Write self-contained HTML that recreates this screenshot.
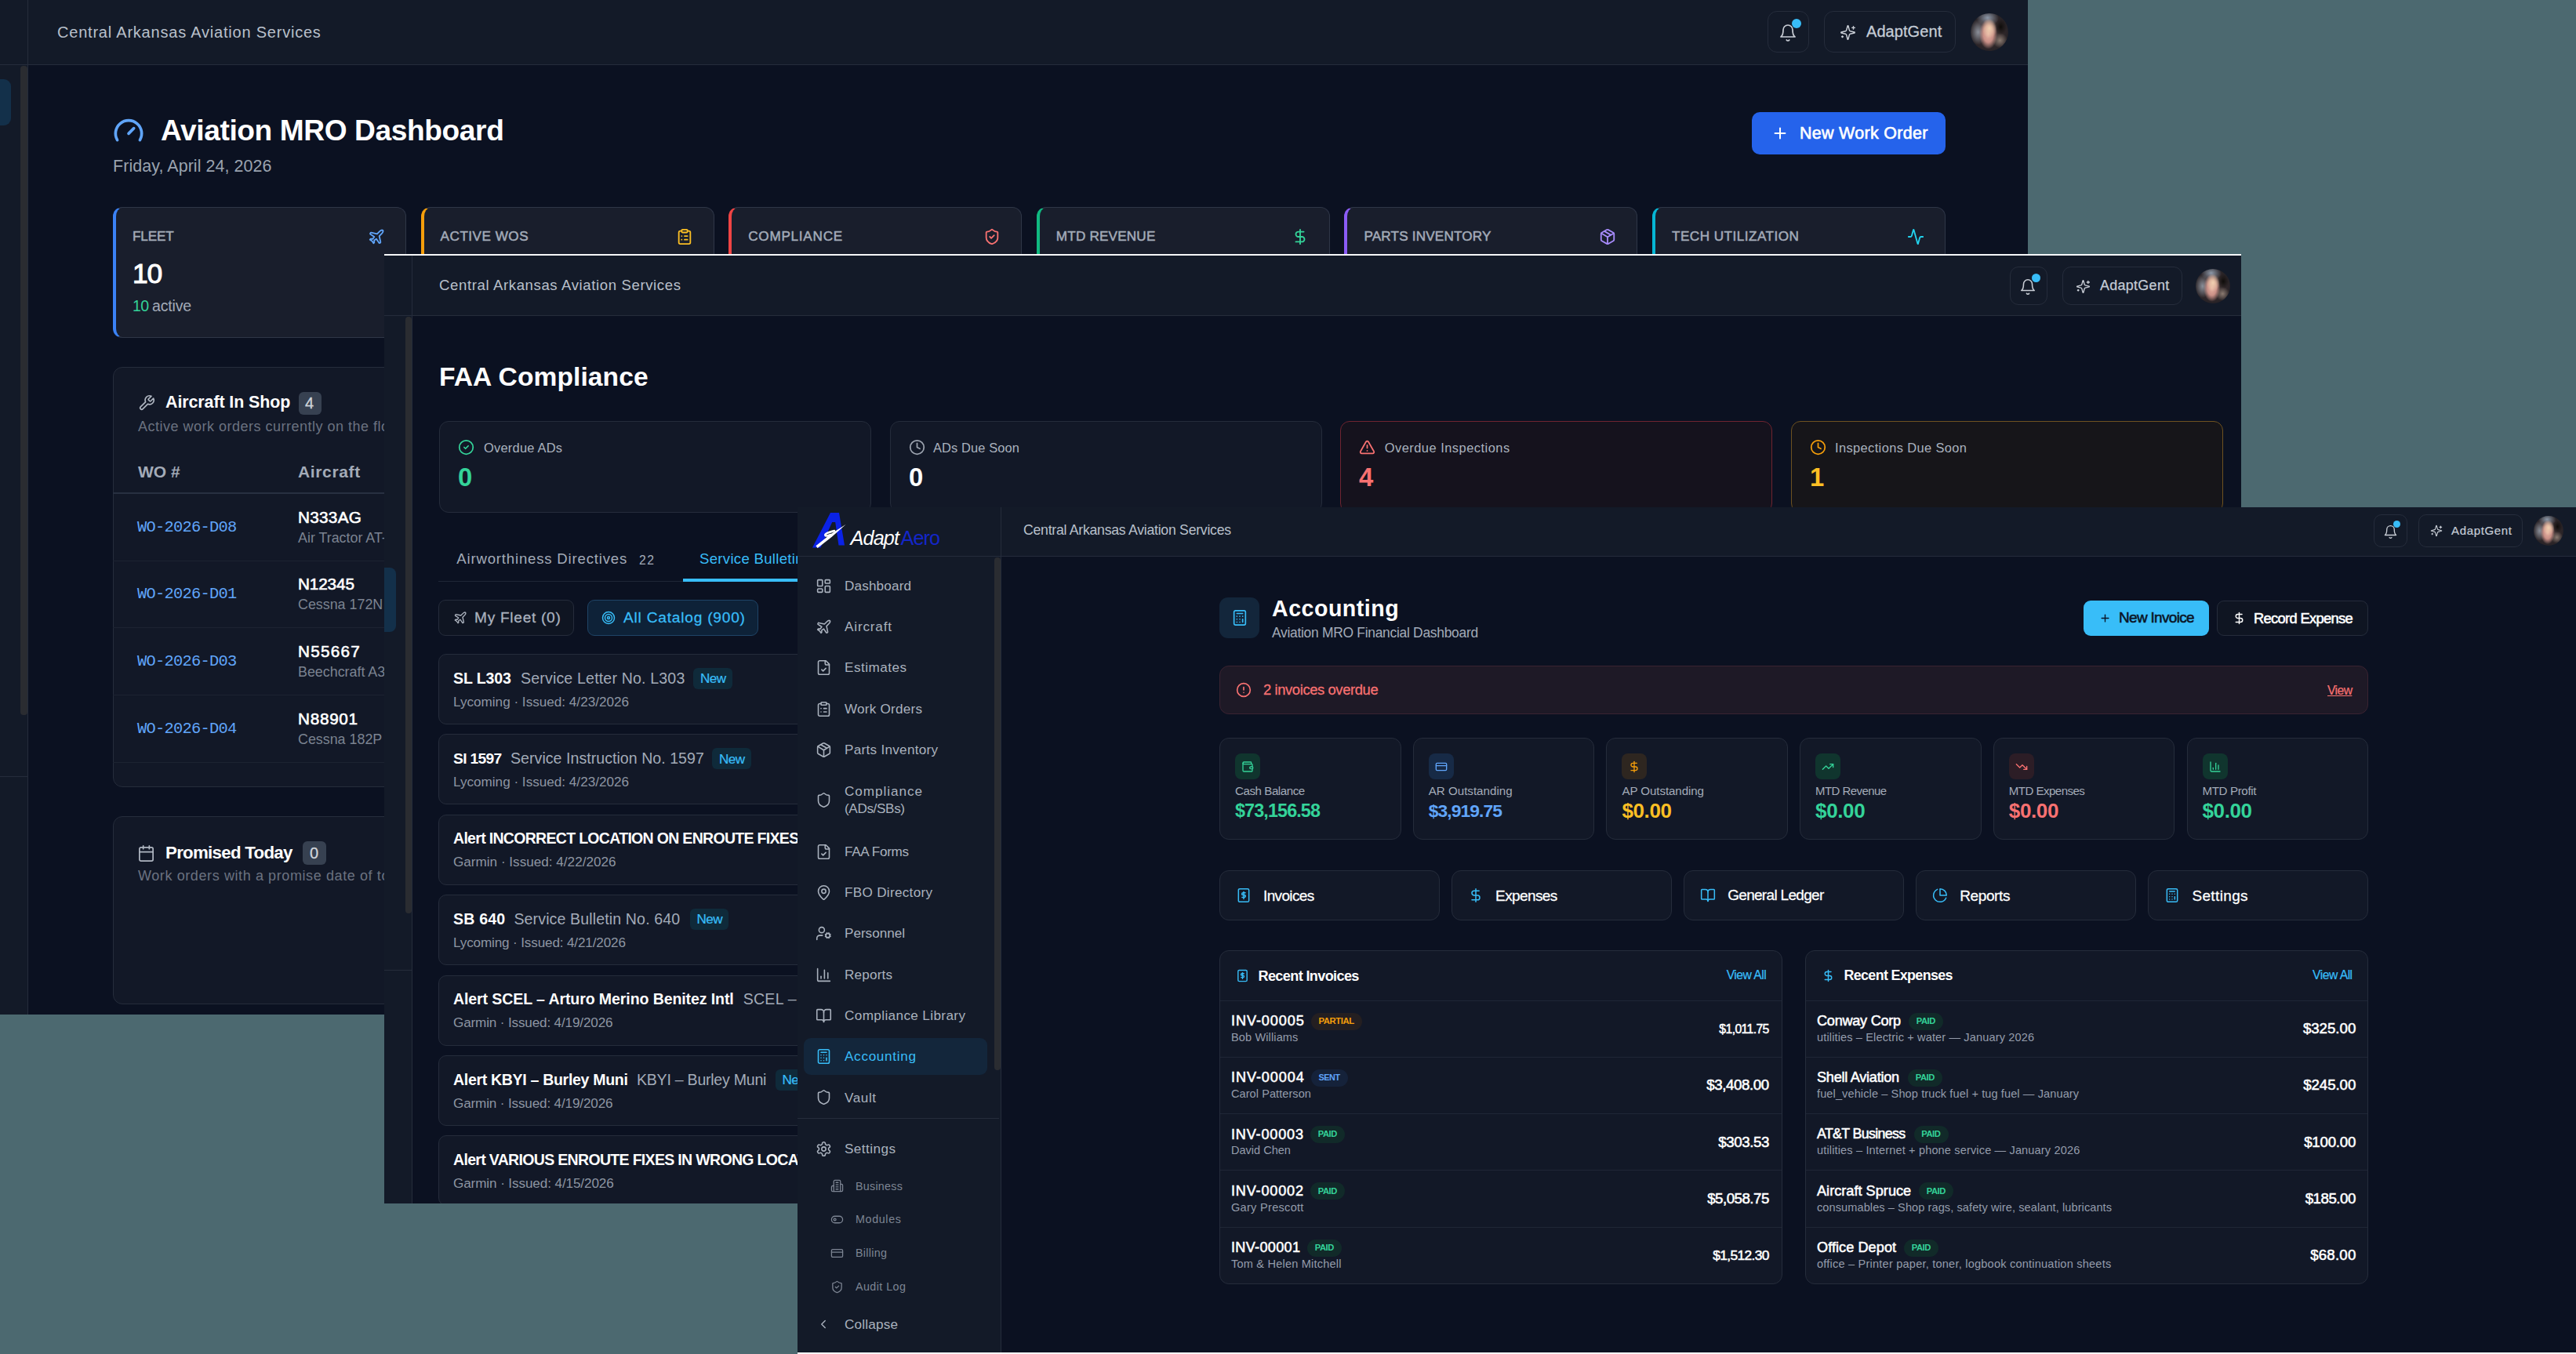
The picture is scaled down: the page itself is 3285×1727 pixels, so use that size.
<!DOCTYPE html><html><head><meta charset="utf-8"><style>html,body{margin:0;padding:0;}body{width:3285px;height:1727px;position:relative;overflow:hidden;background:#4c6970;font-family:'Liberation Sans',sans-serif;}</style></head><body><div style="position:absolute;left:0px;top:0px;width:2586px;height:1294px;background:#0b1121;overflow:hidden;"><div style="position:absolute;left:0px;top:0px;width:35px;height:1294px;background:#131a28;"></div><div style="position:absolute;left:35px;top:0px;width:1px;height:1294px;background:#252c3b;"></div><div style="position:absolute;left:0px;top:101px;width:14px;height:59px;background:#13304a;border-radius:0 9px 9px 0;"></div><div style="position:absolute;left:26px;top:84px;width:9px;height:828px;background:#2a2c31;border-radius:4px;"></div><div style="position:absolute;left:0px;top:990px;width:35px;height:1px;background:#252c3b;"></div><div style="position:absolute;left:36px;top:0px;width:2550px;height:82px;background:#131a28;"></div><div style="position:absolute;left:0px;top:82px;width:2586px;height:1px;background:#252c3b;"></div><div style="position:absolute;left:73px;top:31.26px;font:400 20px 'Liberation Sans',sans-serif;line-height:1;color:#b9c0cb;white-space:nowrap;letter-spacing:0.79px;">Central Arkansas Aviation Services</div><div style="position:absolute;left:2254px;top:14px;width:53px;height:53px;box-sizing:border-box;border:1px solid #252c3b;border-radius:12px;"></div><svg style="position:absolute;left:2268px;top:30px;" width="24" height="24" viewBox="0 0 24 24" fill="none" stroke="#c9ced6" stroke-width="1.7" stroke-linecap="round" stroke-linejoin="round"><path d="M6 8a6 6 0 0 1 12 0c0 7 3 9 3 9H3s3-2 3-9"/><path d="M10.3 21a1.94 1.94 0 0 0 3.4 0"/></svg><div style="position:absolute;left:2285px;top:24px;width:12px;height:12px;border-radius:50%;background:#38bdf8;"></div><div style="position:absolute;left:2326px;top:14px;width:168px;height:53px;box-sizing:border-box;border:1px solid #252c3b;border-radius:12px;"></div><svg style="position:absolute;left:2345.5px;top:30.5px;" width="21" height="21" viewBox="0 0 24 24" fill="none" stroke="#c9ced6" stroke-width="1.7" stroke-linecap="round" stroke-linejoin="round"><path d="M9.937 15.5A2 2 0 0 0 8.5 14.063l-6.135-1.582a.5.5 0 0 1 0-.962L8.5 9.936A2 2 0 0 0 9.937 8.5l1.582-6.135a.5.5 0 0 1 .963 0L14.063 8.5A2 2 0 0 0 15.5 9.937l6.135 1.581a.5.5 0 0 1 0 .964L15.5 14.063a2 2 0 0 0-1.437 1.437l-1.582 6.135a.5.5 0 0 1-.963 0z"/><path d="M20 3v4"/><path d="M22 5h-4"/><path d="M4 17v2"/><path d="M5 18H3"/></svg><div style="position:absolute;left:2380px;top:30.26px;font:400 20px 'Liberation Sans',sans-serif;line-height:1;color:#c5ccd6;white-space:nowrap;letter-spacing:0.07px;-webkit-text-stroke:0.28px #c5ccd6;">AdaptGent</div><div style="position:absolute;left:2513px;top:17px;width:48px;height:48px;border-radius:50%;background:radial-gradient(ellipse 20% 26% at 50% 40%, #f0d0b0 0%, rgba(232,190,170,0) 100%),radial-gradient(ellipse 24% 40% at 47% 55%, #e8b4a4 0%, #c98f86 55%, rgba(150,90,90,0) 100%),radial-gradient(ellipse 16% 22% at 80% 36%, #0e0c0a 0%, rgba(14,12,10,0) 100%),radial-gradient(ellipse 30% 22% at 45% 12%, #8d98a8 0%, rgba(120,130,145,0) 100%),radial-gradient(ellipse 22% 34% at 20% 50%, #8a8f99 0%, rgba(110,105,110,0) 100%),radial-gradient(ellipse 20% 20% at 78% 72%, #8a7a70 0%, rgba(120,110,100,0) 100%),radial-gradient(circle at 50% 50%, #4d3d3c 0%, #2c2528 60%, #1a1c24 100%);"></div><svg style="position:absolute;left:144px;top:147px;" width="40" height="40" viewBox="0 0 24 24" fill="none" stroke="#60a5fa" stroke-width="2.2" stroke-linecap="round" stroke-linejoin="round"><path d="m12 14 4-4"/><path d="M3.34 19a10 10 0 1 1 17.32 0"/></svg><div style="position:absolute;left:205px;top:147.91px;font:700 37.14px 'Liberation Sans',sans-serif;line-height:1;color:#ffffff;white-space:nowrap;letter-spacing:-0.4px;">Aviation MRO Dashboard</div><div style="position:absolute;left:144px;top:202.06px;font:400 21.43px 'Liberation Sans',sans-serif;line-height:1;color:#9aa3af;white-space:nowrap;letter-spacing:0.08px;">Friday, April 24, 2026</div><div style="position:absolute;left:2234px;top:143px;width:247px;height:54px;background:#2563eb;border-radius:10px;"></div><svg style="position:absolute;left:2259px;top:159px;" width="22" height="22" viewBox="0 0 24 24" fill="none" stroke="#ffffff" stroke-width="2.2" stroke-linecap="round" stroke-linejoin="round"><path d="M5 12h14"/><path d="M12 5v14"/></svg><div style="position:absolute;left:2295px;top:160.06px;font:400 21.43px 'Liberation Sans',sans-serif;line-height:1;color:#ffffff;white-space:nowrap;letter-spacing:0.32px;-webkit-text-stroke:0.64px #ffffff;">New Work Order</div><div style="position:absolute;left:144px;top:264px;width:374px;height:167px;box-sizing:border-box;background:#191e2c;border:1px solid #2f3647;border-left:4px solid #3b82f6;border-radius:12px;"></div><div style="position:absolute;left:169px;top:292.65px;font:400 17.14px 'Liberation Sans',sans-serif;line-height:1;color:#a3abb8;white-space:nowrap;letter-spacing:-0.12px;-webkit-text-stroke:0.51px #a3abb8;">FLEET</div><svg style="position:absolute;left:469px;top:290.5px;" width="22" height="22" viewBox="0 0 24 24" fill="none" stroke="#60a5fa" stroke-width="2" stroke-linecap="round" stroke-linejoin="round"><path d="M17.8 19.2 16 11l3.5-3.5C21 6 21.5 4 21 3c-1-.5-3 0-4.5 1.5L13 8 4.8 6.2c-.5-.1-.9.1-1.1.5l-.3.5c-.2.5-.1 1 .3 1.3L9 12l-2 3H4l-1 1 3 2 2 3 1-1v-3l3-2 3.5 5.3c.3.4.8.5 1.3.3l.5-.2c.4-.3.6-.7.5-1.2z"/></svg><div style="position:absolute;left:536.6px;top:264px;width:374px;height:167px;box-sizing:border-box;background:#191e2c;border:1px solid #2f3647;border-left:4px solid #f59e0b;border-radius:12px;"></div><div style="position:absolute;left:561.6px;top:292.65px;font:400 17.14px 'Liberation Sans',sans-serif;line-height:1;color:#a3abb8;white-space:nowrap;letter-spacing:0.5px;-webkit-text-stroke:0.51px #a3abb8;">ACTIVE WOS</div><svg style="position:absolute;left:861.6px;top:290.5px;" width="22" height="22" viewBox="0 0 24 24" fill="none" stroke="#fbbf24" stroke-width="2" stroke-linecap="round" stroke-linejoin="round"><rect width="8" height="4" x="8" y="2" rx="1" ry="1"/><path d="M16 4h2a2 2 0 0 1 2 2v14a2 2 0 0 1-2 2H6a2 2 0 0 1-2-2V6a2 2 0 0 1 2-2h2"/><path d="M12 11h4"/><path d="M12 16h4"/><path d="M8 11h.01"/><path d="M8 16h.01"/></svg><div style="position:absolute;left:929.2px;top:264px;width:374px;height:167px;box-sizing:border-box;background:#191e2c;border:1px solid #2f3647;border-left:4px solid #ef4444;border-radius:12px;"></div><div style="position:absolute;left:954.2px;top:292.65px;font:400 17.14px 'Liberation Sans',sans-serif;line-height:1;color:#a3abb8;white-space:nowrap;letter-spacing:0.75px;-webkit-text-stroke:0.51px #a3abb8;">COMPLIANCE</div><svg style="position:absolute;left:1254.2px;top:290.5px;" width="22" height="22" viewBox="0 0 24 24" fill="none" stroke="#f87171" stroke-width="2" stroke-linecap="round" stroke-linejoin="round"><path d="M20 13c0 5-3.5 7.5-7.66 8.95a1 1 0 0 1-.67-.01C7.5 20.5 4 18 4 13V6a1 1 0 0 1 1-1c2 0 4.5-1.2 6.24-2.72a1.17 1.17 0 0 1 1.52 0C14.51 3.81 17 5 19 5a1 1 0 0 1 1 1z"/><path d="m9 12 2 2 4-4"/></svg><div style="position:absolute;left:1321.8px;top:264px;width:374px;height:167px;box-sizing:border-box;background:#191e2c;border:1px solid #2f3647;border-left:4px solid #10b981;border-radius:12px;"></div><div style="position:absolute;left:1346.8px;top:292.65px;font:400 17.14px 'Liberation Sans',sans-serif;line-height:1;color:#a3abb8;white-space:nowrap;letter-spacing:0.19px;-webkit-text-stroke:0.51px #a3abb8;">MTD REVENUE</div><svg style="position:absolute;left:1646.8px;top:290.5px;" width="22" height="22" viewBox="0 0 24 24" fill="none" stroke="#34d399" stroke-width="2" stroke-linecap="round" stroke-linejoin="round"><line x1="12" x2="12" y1="2" y2="22"/><path d="M17 5H9.5a3.5 3.5 0 0 0 0 7h5a3.5 3.5 0 0 1 0 7H6"/></svg><div style="position:absolute;left:1714.4px;top:264px;width:374px;height:167px;box-sizing:border-box;background:#191e2c;border:1px solid #2f3647;border-left:4px solid #8b5cf6;border-radius:12px;"></div><div style="position:absolute;left:1739.4px;top:292.65px;font:400 17.14px 'Liberation Sans',sans-serif;line-height:1;color:#a3abb8;white-space:nowrap;letter-spacing:0.18px;-webkit-text-stroke:0.51px #a3abb8;">PARTS INVENTORY</div><svg style="position:absolute;left:2039.4px;top:290.5px;" width="22" height="22" viewBox="0 0 24 24" fill="none" stroke="#a78bfa" stroke-width="2" stroke-linecap="round" stroke-linejoin="round"><path d="M11 21.73a2 2 0 0 0 2 0l7-4A2 2 0 0 0 21 16V8a2 2 0 0 0-1-1.73l-7-4a2 2 0 0 0-2 0l-7 4A2 2 0 0 0 3 8v8a2 2 0 0 0 1 1.73z"/><path d="M12 22V12"/><path d="m3.3 7 7.703 4.734a2 2 0 0 0 1.994 0L20.7 7"/><path d="m7.5 4.27 9 5.15"/></svg><div style="position:absolute;left:2107px;top:264px;width:374px;height:167px;box-sizing:border-box;background:#191e2c;border:1px solid #2f3647;border-left:4px solid #06b6d4;border-radius:12px;"></div><div style="position:absolute;left:2132px;top:292.65px;font:400 17.14px 'Liberation Sans',sans-serif;line-height:1;color:#a3abb8;white-space:nowrap;letter-spacing:0.48px;-webkit-text-stroke:0.51px #a3abb8;">TECH UTILIZATION</div><svg style="position:absolute;left:2432px;top:290.5px;" width="22" height="22" viewBox="0 0 24 24" fill="none" stroke="#22d3ee" stroke-width="2" stroke-linecap="round" stroke-linejoin="round"><path d="M22 12h-2.48a2 2 0 0 0-1.93 1.46l-2.35 8.36a.25.25 0 0 1-.48 0L9.24 2.18a.25.25 0 0 0-.48 0l-2.35 8.36A2 2 0 0 1 4.49 12H2"/></svg><div style="position:absolute;left:169px;top:332.32px;font:400 35.46px 'Liberation Sans',sans-serif;line-height:1;color:#ffffff;white-space:nowrap;letter-spacing:-1.3px;-webkit-text-stroke:1.06px #ffffff;">10</div><div style="position:absolute;left:169px;top:381.32px;font:400 19.57px 'Liberation Sans',sans-serif;line-height:1;color:#34d399;white-space:nowrap;letter-spacing:-0.59px;">10</div><div style="position:absolute;left:194px;top:381.32px;font:400 19.57px 'Liberation Sans',sans-serif;line-height:1;color:#a3abb8;white-space:nowrap;letter-spacing:-0.19px;">active</div><div style="position:absolute;left:144px;top:467.5px;width:556px;height:536.5px;box-sizing:border-box;background:#121827;border:1px solid #252c3b;border-radius:12px;"></div><svg style="position:absolute;left:175.5px;top:502.5px;" width="22" height="22" viewBox="0 0 24 24" fill="none" stroke="#b0b7c2" stroke-width="1.8" stroke-linecap="round" stroke-linejoin="round"><path d="M14.7 6.3a1 1 0 0 0 0 1.4l1.6 1.6a1 1 0 0 0 1.4 0l3.77-3.77a6 6 0 0 1-7.94 7.94l-6.91 6.91a2.12 2.12 0 0 1-3-3l6.91-6.91a6 6 0 0 1 7.94-7.94l-3.76 3.76z"/></svg><div style="position:absolute;left:211px;top:503.06px;font:700 21.43px 'Liberation Sans',sans-serif;line-height:1;color:#ffffff;white-space:nowrap;letter-spacing:-0.09px;">Aircraft In Shop</div><div style="position:absolute;left:381px;top:499.5px;width:29px;height:29px;background:#374151;border-radius:6px;"></div><div style="position:absolute;left:389px;top:504.26px;font:400 20px 'Liberation Sans',sans-serif;line-height:1;color:#d1d5db;white-space:nowrap;-webkit-text-stroke:0.28px #d1d5db;">4</div><div style="position:absolute;left:176px;top:534.93px;font:400 18px 'Liberation Sans',sans-serif;line-height:1;color:#6b7280;white-space:nowrap;letter-spacing:0.5px;">Active work orders currently on the floor</div><div style="position:absolute;left:176px;top:591.42px;font:700 21px 'Liberation Sans',sans-serif;line-height:1;color:#a3abb8;white-space:nowrap;">WO #</div><div style="position:absolute;left:380px;top:591.42px;font:700 21px 'Liberation Sans',sans-serif;line-height:1;color:#a3abb8;white-space:nowrap;letter-spacing:0.65px;">Aircraft</div><div style="position:absolute;left:144px;top:628px;width:556px;height:2px;background:#283041;"></div><div style="position:absolute;left:175px;top:662.58px;font:400 20.37px 'Liberation Mono',monospace;line-height:1;color:#60a5fa;white-space:nowrap;letter-spacing:-0.72px;">WO-2026-D08</div><div style="position:absolute;left:380px;top:649.66px;font:400 20.71px 'Liberation Sans',sans-serif;line-height:1;color:#ffffff;white-space:nowrap;letter-spacing:0.29px;-webkit-text-stroke:0.62px #ffffff;">N333AG</div><div style="position:absolute;left:380px;top:677.55px;font:400 17.86px 'Liberation Sans',sans-serif;line-height:1;color:#7b8391;white-space:nowrap;">Air Tractor AT-502B</div><div style="position:absolute;left:144px;top:714.5px;width:556px;height:1px;background:#1c2331;"></div><div style="position:absolute;left:175px;top:747.98px;font:400 20.37px 'Liberation Mono',monospace;line-height:1;color:#60a5fa;white-space:nowrap;letter-spacing:-0.72px;">WO-2026-D01</div><div style="position:absolute;left:380px;top:735.06px;font:400 20.71px 'Liberation Sans',sans-serif;line-height:1;color:#ffffff;white-space:nowrap;letter-spacing:-0.12px;-webkit-text-stroke:0.62px #ffffff;">N12345</div><div style="position:absolute;left:380px;top:762.95px;font:400 17.86px 'Liberation Sans',sans-serif;line-height:1;color:#7b8391;white-space:nowrap;">Cessna 172N Skyhawk</div><div style="position:absolute;left:144px;top:799.9px;width:556px;height:1px;background:#1c2331;"></div><div style="position:absolute;left:175px;top:833.68px;font:400 20.37px 'Liberation Mono',monospace;line-height:1;color:#60a5fa;white-space:nowrap;letter-spacing:-0.72px;">WO-2026-D03</div><div style="position:absolute;left:380px;top:820.76px;font:400 20.71px 'Liberation Sans',sans-serif;line-height:1;color:#ffffff;white-space:nowrap;letter-spacing:1.24px;-webkit-text-stroke:0.62px #ffffff;">N55667</div><div style="position:absolute;left:380px;top:848.65px;font:400 17.86px 'Liberation Sans',sans-serif;line-height:1;color:#7b8391;white-space:nowrap;">Beechcraft A36 Bonanza</div><div style="position:absolute;left:144px;top:885.6px;width:556px;height:1px;background:#1c2331;"></div><div style="position:absolute;left:175px;top:919.58px;font:400 20.37px 'Liberation Mono',monospace;line-height:1;color:#60a5fa;white-space:nowrap;letter-spacing:-0.72px;">WO-2026-D04</div><div style="position:absolute;left:380px;top:906.66px;font:400 20.71px 'Liberation Sans',sans-serif;line-height:1;color:#ffffff;white-space:nowrap;letter-spacing:0.72px;-webkit-text-stroke:0.62px #ffffff;">N88901</div><div style="position:absolute;left:380px;top:934.55px;font:400 17.86px 'Liberation Sans',sans-serif;line-height:1;color:#7b8391;white-space:nowrap;">Cessna 182P Skylane</div><div style="position:absolute;left:144px;top:971.5px;width:556px;height:1px;background:#1c2331;"></div><div style="position:absolute;left:144px;top:1041px;width:556px;height:240px;box-sizing:border-box;background:#121827;border:1px solid #252c3b;border-radius:12px;"></div><svg style="position:absolute;left:174.5px;top:1076.5px;" width="23" height="23" viewBox="0 0 24 24" fill="none" stroke="#b0b7c2" stroke-width="1.8" stroke-linecap="round" stroke-linejoin="round"><path d="M8 2v4"/><path d="M16 2v4"/><rect width="18" height="18" x="3" y="4" rx="2"/><path d="M3 10h18"/></svg><div style="position:absolute;left:211px;top:1076.95px;font:700 22.29px 'Liberation Sans',sans-serif;line-height:1;color:#ffffff;white-space:nowrap;letter-spacing:-0.72px;">Promised Today</div><div style="position:absolute;left:386px;top:1073px;width:30px;height:30px;background:#374151;border-radius:6px;"></div><div style="position:absolute;left:395px;top:1078.26px;font:400 20px 'Liberation Sans',sans-serif;line-height:1;color:#d1d5db;white-space:nowrap;-webkit-text-stroke:0.28px #d1d5db;">0</div><div style="position:absolute;left:176px;top:1108.43px;font:400 18px 'Liberation Sans',sans-serif;line-height:1;color:#6b7280;white-space:nowrap;letter-spacing:0.6px;">Work orders with a promise date of today</div></div><div style="position:absolute;left:490px;top:324px;width:2368px;height:1211px;background:#0b1121;overflow:hidden;"><div style="position:absolute;left:0px;top:0px;width:2368px;height:2px;background:#f6f7f9;"></div><div style="position:absolute;left:0px;top:2px;width:35px;height:1209px;background:#131a28;"></div><div style="position:absolute;left:35px;top:2px;width:1px;height:1209px;background:#252c3b;"></div><div style="position:absolute;left:0px;top:400px;width:15px;height:82px;background:#13304a;border-radius:0 8px 8px 0;"></div><div style="position:absolute;left:27px;top:80px;width:8px;height:761px;background:#2a2c31;border-radius:4px;"></div><div style="position:absolute;left:0px;top:912.5px;width:35px;height:1px;background:#252c3b;"></div><div style="position:absolute;left:36px;top:2px;width:2332px;height:76px;background:#131a28;"></div><div style="position:absolute;left:0px;top:78px;width:2368px;height:1px;background:#252c3b;"></div><div style="position:absolute;left:70px;top:31.46px;font:400 18.57px 'Liberation Sans',sans-serif;line-height:1;color:#b9c0cb;white-space:nowrap;letter-spacing:0.62px;">Central Arkansas Aviation Services</div><div style="position:absolute;left:2073px;top:16px;width:48px;height:48.5px;box-sizing:border-box;border:1px solid #252c3b;border-radius:11px;"></div><svg style="position:absolute;left:2085px;top:31px;" width="22" height="22" viewBox="0 0 24 24" fill="none" stroke="#c9ced6" stroke-width="1.7" stroke-linecap="round" stroke-linejoin="round"><path d="M6 8a6 6 0 0 1 12 0c0 7 3 9 3 9H3s3-2 3-9"/><path d="M10.3 21a1.94 1.94 0 0 0 3.4 0"/></svg><div style="position:absolute;left:2101px;top:25px;width:11px;height:11px;border-radius:50%;background:#38bdf8;"></div><div style="position:absolute;left:2140px;top:16px;width:153px;height:48.5px;box-sizing:border-box;border:1px solid #252c3b;border-radius:11px;"></div><svg style="position:absolute;left:2156.5px;top:31.5px;" width="19" height="19" viewBox="0 0 24 24" fill="none" stroke="#c9ced6" stroke-width="1.7" stroke-linecap="round" stroke-linejoin="round"><path d="M9.937 15.5A2 2 0 0 0 8.5 14.063l-6.135-1.582a.5.5 0 0 1 0-.962L8.5 9.936A2 2 0 0 0 9.937 8.5l1.582-6.135a.5.5 0 0 1 .963 0L14.063 8.5A2 2 0 0 0 15.5 9.937l6.135 1.581a.5.5 0 0 1 0 .964L15.5 14.063a2 2 0 0 0-1.437 1.437l-1.582 6.135a.5.5 0 0 1-.963 0z"/><path d="M20 3v4"/><path d="M22 5h-4"/><path d="M4 17v2"/><path d="M5 18H3"/></svg><div style="position:absolute;left:2188px;top:31.55px;font:400 17.86px 'Liberation Sans',sans-serif;line-height:1;color:#c5ccd6;white-space:nowrap;letter-spacing:0.34px;-webkit-text-stroke:0.25px #c5ccd6;">AdaptGent</div><div style="position:absolute;left:2310px;top:18.5px;width:44px;height:44px;border-radius:50%;background:radial-gradient(ellipse 20% 26% at 50% 40%, #f0d0b0 0%, rgba(232,190,170,0) 100%),radial-gradient(ellipse 24% 40% at 47% 55%, #e8b4a4 0%, #c98f86 55%, rgba(150,90,90,0) 100%),radial-gradient(ellipse 16% 22% at 80% 36%, #0e0c0a 0%, rgba(14,12,10,0) 100%),radial-gradient(ellipse 30% 22% at 45% 12%, #8d98a8 0%, rgba(120,130,145,0) 100%),radial-gradient(ellipse 22% 34% at 20% 50%, #8a8f99 0%, rgba(110,105,110,0) 100%),radial-gradient(ellipse 20% 20% at 78% 72%, #8a7a70 0%, rgba(120,110,100,0) 100%),radial-gradient(circle at 50% 50%, #4d3d3c 0%, #2c2528 60%, #1a1c24 100%);"></div><div style="position:absolute;left:70px;top:139.9px;font:700 33.57px 'Liberation Sans',sans-serif;line-height:1;color:#ffffff;white-space:nowrap;letter-spacing:0.09px;">FAA Compliance</div><div style="position:absolute;left:70px;top:213px;width:551px;height:117px;box-sizing:border-box;background:#121827;border:1px solid #252c3b;border-radius:12px;"></div><svg style="position:absolute;left:94px;top:235.5px;" width="21" height="21" viewBox="0 0 24 24" fill="none" stroke="#34d399" stroke-width="2" stroke-linecap="round" stroke-linejoin="round"><circle cx="12" cy="12" r="10"/><path d="m9 12 2 2 4-4"/></svg><div style="position:absolute;left:127px;top:238.75px;font:400 16.43px 'Liberation Sans',sans-serif;line-height:1;color:#aab2be;white-space:nowrap;letter-spacing:0.24px;">Overdue ADs</div><div style="position:absolute;left:94px;top:268.5px;font:700 32.86px 'Liberation Sans',sans-serif;line-height:1;color:#34d399;white-space:nowrap;">0</div><div style="position:absolute;left:645px;top:213px;width:551px;height:117px;box-sizing:border-box;background:#121827;border:1px solid #252c3b;border-radius:12px;"></div><svg style="position:absolute;left:669px;top:235.5px;" width="21" height="21" viewBox="0 0 24 24" fill="none" stroke="#9ca3af" stroke-width="2" stroke-linecap="round" stroke-linejoin="round"><circle cx="12" cy="12" r="10"/><polyline points="12 6 12 12 16 14"/></svg><div style="position:absolute;left:700px;top:238.75px;font:400 16.43px 'Liberation Sans',sans-serif;line-height:1;color:#aab2be;white-space:nowrap;letter-spacing:0.12px;">ADs Due Soon</div><div style="position:absolute;left:669px;top:268.5px;font:700 32.86px 'Liberation Sans',sans-serif;line-height:1;color:#ffffff;white-space:nowrap;">0</div><div style="position:absolute;left:1219px;top:213px;width:551px;height:117px;box-sizing:border-box;background:#15121d;border:1px solid #6e2430;border-radius:12px;"></div><svg style="position:absolute;left:1243px;top:235.5px;" width="21" height="21" viewBox="0 0 24 24" fill="none" stroke="#f87171" stroke-width="2" stroke-linecap="round" stroke-linejoin="round"><path d="m21.73 18-8-14a2 2 0 0 0-3.48 0l-8 14A2 2 0 0 0 4 21h16a2 2 0 0 0 1.73-3"/><path d="M12 9v4"/><path d="M12 17h.01"/></svg><div style="position:absolute;left:1275.7px;top:238.75px;font:400 16.43px 'Liberation Sans',sans-serif;line-height:1;color:#aab2be;white-space:nowrap;letter-spacing:0.49px;">Overdue Inspections</div><div style="position:absolute;left:1243px;top:268.5px;font:700 32.86px 'Liberation Sans',sans-serif;line-height:1;color:#f87171;white-space:nowrap;">4</div><div style="position:absolute;left:1794px;top:213px;width:551px;height:117px;box-sizing:border-box;background:#161519;border:1px solid #6e5220;border-radius:12px;"></div><svg style="position:absolute;left:1818px;top:235.5px;" width="21" height="21" viewBox="0 0 24 24" fill="none" stroke="#f59e0b" stroke-width="2" stroke-linecap="round" stroke-linejoin="round"><circle cx="12" cy="12" r="10"/><polyline points="12 6 12 12 16 14"/></svg><div style="position:absolute;left:1850px;top:238.75px;font:400 16.43px 'Liberation Sans',sans-serif;line-height:1;color:#aab2be;white-space:nowrap;letter-spacing:0.38px;">Inspections Due Soon</div><div style="position:absolute;left:1818px;top:268.5px;font:700 32.86px 'Liberation Sans',sans-serif;line-height:1;color:#fbbf24;white-space:nowrap;">1</div><div style="position:absolute;left:92.3px;top:380.46px;font:400 18.57px 'Liberation Sans',sans-serif;line-height:1;color:#a3abb8;white-space:nowrap;letter-spacing:0.82px;">Airworthiness Directives</div><div style="position:absolute;left:325px;top:382.85px;font:400 15.71px 'Liberation Sans',sans-serif;line-height:1;color:#a3abb8;white-space:nowrap;letter-spacing:1.48px;">22</div><div style="position:absolute;left:402px;top:380.46px;font:400 18.57px 'Liberation Sans',sans-serif;line-height:1;color:#38bdf8;white-space:nowrap;letter-spacing:0.31px;">Service Bulletins</div><div style="position:absolute;left:69px;top:416.5px;width:2275px;height:1px;background:#1f2636;"></div><div style="position:absolute;left:381px;top:414px;width:249px;height:3.5px;background:#38bdf8;"></div><div style="position:absolute;left:69.4px;top:440.5px;width:172.4px;height:46.2px;box-sizing:border-box;background:#0f1522;border:1px solid #252c3b;border-radius:9px;"></div><svg style="position:absolute;left:88px;top:454.5px;" width="18" height="18" viewBox="0 0 24 24" fill="none" stroke="#b0b7c2" stroke-width="1.8" stroke-linecap="round" stroke-linejoin="round"><path d="M17.8 19.2 16 11l3.5-3.5C21 6 21.5 4 21 3c-1-.5-3 0-4.5 1.5L13 8 4.8 6.2c-.5-.1-.9.1-1.1.5l-.3.5c-.2.5-.1 1 .3 1.3L9 12l-2 3H4l-1 1 3 2 2 3 1-1v-3l3-2 3.5 5.3c.3.4.8.5 1.3.3l.5-.2c.4-.3.6-.7.5-1.2z"/></svg><div style="position:absolute;left:115px;top:453.98px;font:400 19.14px 'Liberation Sans',sans-serif;line-height:1;color:#aab2bf;white-space:nowrap;letter-spacing:0.71px;-webkit-text-stroke:0.27px #aab2bf;">My Fleet (0)</div><div style="position:absolute;left:259px;top:440.5px;width:217.6px;height:46.2px;box-sizing:border-box;background:#0e2238;border:1px solid #1f4466;border-radius:9px;"></div><svg style="position:absolute;left:277px;top:454.5px;" width="18" height="18" viewBox="0 0 24 24" fill="none" stroke="#38bdf8" stroke-width="2" stroke-linecap="round" stroke-linejoin="round"><circle cx="12" cy="12" r="10"/><circle cx="12" cy="12" r="6"/><circle cx="12" cy="12" r="2"/></svg><div style="position:absolute;left:305px;top:453.98px;font:400 19.14px 'Liberation Sans',sans-serif;line-height:1;color:#38bdf8;white-space:nowrap;letter-spacing:0.78px;-webkit-text-stroke:0.27px #38bdf8;">All Catalog (900)</div><div style="position:absolute;left:69px;top:510px;width:841px;height:90px;box-sizing:border-box;background:#121827;border:1px solid #252c3b;border-radius:10px;"></div><div style="position:absolute;left:88px;top:531.62px;font:700 19.57px 'Liberation Sans',sans-serif;line-height:1;color:#ffffff;white-space:nowrap;letter-spacing:-0.14px;">SL L303</div><div style="position:absolute;left:174px;top:531.62px;font:400 19.57px 'Liberation Sans',sans-serif;line-height:1;color:#a3abb8;white-space:nowrap;letter-spacing:0.17px;">Service Letter No. L303</div><div style="position:absolute;left:394px;top:527.5px;width:49.6px;height:27.2px;background:#0f2a3a;border-radius:6px;"></div><div style="position:absolute;left:403px;top:533.16px;font:400 17.13px 'Liberation Sans',sans-serif;line-height:1;color:#38bdf8;white-space:nowrap;letter-spacing:-0.62px;-webkit-text-stroke:0.24px #38bdf8;">New</div><div style="position:absolute;left:88px;top:562.65px;font:400 17.14px 'Liberation Sans',sans-serif;line-height:1;color:#8d95a2;white-space:nowrap;">Lycoming · Issued: 4/23/2026</div><div style="position:absolute;left:69px;top:612.4px;width:841px;height:90px;box-sizing:border-box;background:#121827;border:1px solid #252c3b;border-radius:10px;"></div><div style="position:absolute;left:88px;top:634.3px;font:700 19.23px 'Liberation Sans',sans-serif;line-height:1;color:#ffffff;white-space:nowrap;letter-spacing:-0.69px;">SI 1597</div><div style="position:absolute;left:161px;top:634.02px;font:400 19.57px 'Liberation Sans',sans-serif;line-height:1;color:#a3abb8;white-space:nowrap;letter-spacing:0.04px;">Service Instruction No. 1597</div><div style="position:absolute;left:418px;top:629.9px;width:49.6px;height:27.2px;background:#0f2a3a;border-radius:6px;"></div><div style="position:absolute;left:427px;top:635.56px;font:400 17.13px 'Liberation Sans',sans-serif;line-height:1;color:#38bdf8;white-space:nowrap;letter-spacing:-0.62px;-webkit-text-stroke:0.24px #38bdf8;">New</div><div style="position:absolute;left:88px;top:665.05px;font:400 17.14px 'Liberation Sans',sans-serif;line-height:1;color:#8d95a2;white-space:nowrap;">Lycoming · Issued: 4/23/2026</div><div style="position:absolute;left:69px;top:714.8px;width:841px;height:90px;box-sizing:border-box;background:#121827;border:1px solid #252c3b;border-radius:10px;"></div><div style="position:absolute;left:88px;top:736.48px;font:700 19.5px 'Liberation Sans',sans-serif;line-height:1;color:#ffffff;white-space:nowrap;letter-spacing:-0.69px;">Alert INCORRECT LOCATION ON ENROUTE FIXES</div><div style="position:absolute;left:88px;top:767.45px;font:400 17.14px 'Liberation Sans',sans-serif;line-height:1;color:#8d95a2;white-space:nowrap;">Garmin · Issued: 4/22/2026</div><div style="position:absolute;left:69px;top:817.2px;width:841px;height:90px;box-sizing:border-box;background:#121827;border:1px solid #252c3b;border-radius:10px;"></div><div style="position:absolute;left:88px;top:838.82px;font:700 19.57px 'Liberation Sans',sans-serif;line-height:1;color:#ffffff;white-space:nowrap;letter-spacing:0.18px;">SB 640</div><div style="position:absolute;left:165.4px;top:838.82px;font:400 19.57px 'Liberation Sans',sans-serif;line-height:1;color:#a3abb8;white-space:nowrap;letter-spacing:0.13px;">Service Bulletin No. 640</div><div style="position:absolute;left:389.6px;top:834.7px;width:49.6px;height:27.2px;background:#0f2a3a;border-radius:6px;"></div><div style="position:absolute;left:398.6px;top:840.36px;font:400 17.13px 'Liberation Sans',sans-serif;line-height:1;color:#38bdf8;white-space:nowrap;letter-spacing:-0.62px;-webkit-text-stroke:0.24px #38bdf8;">New</div><div style="position:absolute;left:88px;top:869.85px;font:400 17.14px 'Liberation Sans',sans-serif;line-height:1;color:#8d95a2;white-space:nowrap;letter-spacing:-0.15px;">Lycoming · Issued: 4/21/2026</div><div style="position:absolute;left:69px;top:919.6px;width:841px;height:90px;box-sizing:border-box;background:#121827;border:1px solid #252c3b;border-radius:10px;"></div><div style="position:absolute;left:88px;top:941.22px;font:700 19.57px 'Liberation Sans',sans-serif;line-height:1;color:#ffffff;white-space:nowrap;letter-spacing:-0.11px;">Alert SCEL – Arturo Merino Benitez Intl</div><div style="position:absolute;left:457.7px;top:941.22px;font:400 19.57px 'Liberation Sans',sans-serif;line-height:1;color:#a3abb8;white-space:nowrap;letter-spacing:0.24px;">SCEL – Arturo Merino Benitez Intl</div><div style="position:absolute;left:88px;top:972.25px;font:400 17.14px 'Liberation Sans',sans-serif;line-height:1;color:#8d95a2;white-space:nowrap;letter-spacing:-0.16px;">Garmin · Issued: 4/19/2026</div><div style="position:absolute;left:69px;top:1022px;width:841px;height:90px;box-sizing:border-box;background:#121827;border:1px solid #252c3b;border-radius:10px;"></div><div style="position:absolute;left:88px;top:1043.62px;font:700 19.57px 'Liberation Sans',sans-serif;line-height:1;color:#ffffff;white-space:nowrap;letter-spacing:-0.33px;">Alert KBYI – Burley Muni</div><div style="position:absolute;left:322px;top:1043.62px;font:400 19.57px 'Liberation Sans',sans-serif;line-height:1;color:#a3abb8;white-space:nowrap;letter-spacing:-0.25px;">KBYI – Burley Muni</div><div style="position:absolute;left:498.5px;top:1039.5px;width:49.6px;height:27.2px;background:#0f2a3a;border-radius:6px;"></div><div style="position:absolute;left:507.5px;top:1045.16px;font:400 17.13px 'Liberation Sans',sans-serif;line-height:1;color:#38bdf8;white-space:nowrap;letter-spacing:-0.62px;-webkit-text-stroke:0.24px #38bdf8;">New</div><div style="position:absolute;left:88px;top:1074.65px;font:400 17.14px 'Liberation Sans',sans-serif;line-height:1;color:#8d95a2;white-space:nowrap;letter-spacing:-0.16px;">Garmin · Issued: 4/19/2026</div><div style="position:absolute;left:69px;top:1124.4px;width:841px;height:90px;box-sizing:border-box;background:#121827;border:1px solid #252c3b;border-radius:10px;"></div><div style="position:absolute;left:88px;top:1146.03px;font:700 19.55px 'Liberation Sans',sans-serif;line-height:1;color:#ffffff;white-space:nowrap;letter-spacing:-0.69px;">Alert VARIOUS ENROUTE FIXES IN WRONG LOCATIONS</div><div style="position:absolute;left:88px;top:1177.05px;font:400 17.14px 'Liberation Sans',sans-serif;line-height:1;color:#8d95a2;white-space:nowrap;letter-spacing:-0.11px;">Garmin · Issued: 4/15/2026</div></div><div style="position:absolute;left:1017px;top:647px;width:2268px;height:1080px;background:#0b1121;overflow:hidden;"><div style="position:absolute;left:0px;top:1078px;width:2268px;height:2px;background:#fdfdfd;"></div><div style="position:absolute;left:0px;top:0px;width:259px;height:1078px;background:#131a28;"></div><div style="position:absolute;left:259px;top:0px;width:1px;height:1078px;background:#252c3b;"></div><div style="position:absolute;left:0px;top:62px;width:259px;height:1px;background:#252c3b;"></div><div style="position:absolute;left:251px;top:64px;width:8px;height:654px;background:#2a2c31;border-radius:4px;"></div><svg style="position:absolute;left:17px;top:5px" width="50" height="50" viewBox="0 0 50 50"><path d="M2 46.5 L25 2 L36 2 L43 43.5 L35.5 43.5 L31.2 14 L27.2 14 L12.5 46.5 Z" fill="#0a22e6"/><path d="M6.4 44.3 L24.9 29.6 L44.8 16.8 L27.1 32.4 L8.6 47.1 Z" fill="#ffffff"/><path d="M30 25 C23 27 18 28.5 18.3 30.6 C18.8 32.3 22.5 31.3 25.5 30" stroke="#ffffff" stroke-width="2.6" fill="none" stroke-linecap="round"/></svg><div style="position:absolute;left:67.5px;top:27.09px;font:italic 300 25.34px 'Liberation Sans',sans-serif;line-height:1;color:#ffffff;white-space:nowrap;letter-spacing:-0.92px;">Adapt</div><div style="position:absolute;left:131.5px;top:27.18px;font:300 25.23px 'Liberation Sans',sans-serif;line-height:1;color:#1426c8;white-space:nowrap;letter-spacing:-0.91px;">Aero</div><div style="position:absolute;left:8px;top:677px;width:234px;height:46.5px;background:#13263b;border-radius:9px;"></div><svg style="position:absolute;left:23px;top:89.5px;" width="21" height="21" viewBox="0 0 24 24" fill="none" stroke="#aab2be" stroke-width="1.8" stroke-linecap="round" stroke-linejoin="round"><rect width="7" height="9" x="3" y="3" rx="1"/><rect width="7" height="5" x="14" y="3" rx="1"/><rect width="7" height="9" x="14" y="12" rx="1"/><rect width="7" height="5" x="3" y="16" rx="1"/></svg><div style="position:absolute;left:60px;top:91.65px;font:400 17.14px 'Liberation Sans',sans-serif;line-height:1;color:#aab2be;white-space:nowrap;letter-spacing:0.16px;">Dashboard</div><svg style="position:absolute;left:23px;top:142.1px;" width="21" height="21" viewBox="0 0 24 24" fill="none" stroke="#aab2be" stroke-width="1.8" stroke-linecap="round" stroke-linejoin="round"><path d="M17.8 19.2 16 11l3.5-3.5C21 6 21.5 4 21 3c-1-.5-3 0-4.5 1.5L13 8 4.8 6.2c-.5-.1-.9.1-1.1.5l-.3.5c-.2.5-.1 1 .3 1.3L9 12l-2 3H4l-1 1 3 2 2 3 1-1v-3l3-2 3.5 5.3c.3.4.8.5 1.3.3l.5-.2c.4-.3.6-.7.5-1.2z"/></svg><div style="position:absolute;left:60px;top:144.25px;font:400 17.14px 'Liberation Sans',sans-serif;line-height:1;color:#aab2be;white-space:nowrap;letter-spacing:0.83px;">Aircraft</div><svg style="position:absolute;left:23px;top:194.3px;" width="21" height="21" viewBox="0 0 24 24" fill="none" stroke="#aab2be" stroke-width="1.8" stroke-linecap="round" stroke-linejoin="round"><path d="M15 2H6a2 2 0 0 0-2 2v16a2 2 0 0 0 2 2h12a2 2 0 0 0 2-2V7Z"/><path d="M14 2v4a2 2 0 0 0 2 2h4"/><path d="m9 15 2 2 4-4"/></svg><div style="position:absolute;left:60px;top:196.45px;font:400 17.14px 'Liberation Sans',sans-serif;line-height:1;color:#aab2be;white-space:nowrap;letter-spacing:0.48px;">Estimates</div><svg style="position:absolute;left:23px;top:246.5px;" width="21" height="21" viewBox="0 0 24 24" fill="none" stroke="#aab2be" stroke-width="1.8" stroke-linecap="round" stroke-linejoin="round"><rect width="8" height="4" x="8" y="2" rx="1" ry="1"/><path d="M16 4h2a2 2 0 0 1 2 2v14a2 2 0 0 1-2 2H6a2 2 0 0 1-2-2V6a2 2 0 0 1 2-2h2"/><path d="M12 11h4"/><path d="M12 16h4"/><path d="M8 11h.01"/><path d="M8 16h.01"/></svg><div style="position:absolute;left:60px;top:248.65px;font:400 17.14px 'Liberation Sans',sans-serif;line-height:1;color:#aab2be;white-space:nowrap;letter-spacing:0.23px;">Work Orders</div><svg style="position:absolute;left:23px;top:298.9px;" width="21" height="21" viewBox="0 0 24 24" fill="none" stroke="#aab2be" stroke-width="1.8" stroke-linecap="round" stroke-linejoin="round"><path d="M11 21.73a2 2 0 0 0 2 0l7-4A2 2 0 0 0 21 16V8a2 2 0 0 0-1-1.73l-7-4a2 2 0 0 0-2 0l-7 4A2 2 0 0 0 3 8v8a2 2 0 0 0 1 1.73z"/><path d="M12 22V12"/><path d="m3.3 7 7.703 4.734a2 2 0 0 0 1.994 0L20.7 7"/><path d="m7.5 4.27 9 5.15"/></svg><div style="position:absolute;left:60px;top:301.05px;font:400 17.14px 'Liberation Sans',sans-serif;line-height:1;color:#aab2be;white-space:nowrap;letter-spacing:0.28px;">Parts Inventory</div><svg style="position:absolute;left:23px;top:362.5px;" width="21" height="21" viewBox="0 0 24 24" fill="none" stroke="#aab2be" stroke-width="1.8" stroke-linecap="round" stroke-linejoin="round"><path d="M20 13c0 5-3.5 7.5-7.66 8.95a1 1 0 0 1-.67-.01C7.5 20.5 4 18 4 13V6a1 1 0 0 1 1-1c2 0 4.5-1.2 6.24-2.72a1.17 1.17 0 0 1 1.52 0C14.51 3.81 17 5 19 5a1 1 0 0 1 1 1z"/></svg><svg style="position:absolute;left:23px;top:429px;" width="21" height="21" viewBox="0 0 24 24" fill="none" stroke="#aab2be" stroke-width="1.8" stroke-linecap="round" stroke-linejoin="round"><path d="M15 2H6a2 2 0 0 0-2 2v16a2 2 0 0 0 2 2h12a2 2 0 0 0 2-2V7Z"/><path d="M14 2v4a2 2 0 0 0 2 2h4"/><path d="m9 15 2 2 4-4"/></svg><div style="position:absolute;left:60px;top:431.15px;font:400 17.14px 'Liberation Sans',sans-serif;line-height:1;color:#aab2be;white-space:nowrap;letter-spacing:-0.33px;">FAA Forms</div><svg style="position:absolute;left:23px;top:480.8px;" width="21" height="21" viewBox="0 0 24 24" fill="none" stroke="#aab2be" stroke-width="1.8" stroke-linecap="round" stroke-linejoin="round"><path d="M20 10c0 4.993-5.539 10.193-7.399 11.799a1 1 0 0 1-1.202 0C9.539 20.193 4 14.993 4 10a8 8 0 0 1 16 0"/><circle cx="12" cy="10" r="3"/></svg><div style="position:absolute;left:60px;top:482.95px;font:400 17.14px 'Liberation Sans',sans-serif;line-height:1;color:#aab2be;white-space:nowrap;letter-spacing:0.3px;">FBO Directory</div><svg style="position:absolute;left:23px;top:533px;" width="21" height="21" viewBox="0 0 24 24" fill="none" stroke="#aab2be" stroke-width="1.8" stroke-linecap="round" stroke-linejoin="round"><circle cx="9" cy="7" r="4"/><path d="M2 21v-2a4 4 0 0 1 4-4h4"/><circle cx="18" cy="15" r="3"/><path d="m21.7 16.4-.9-.3"/><path d="m15.2 13.9-.9-.3"/><path d="m16.6 18.7.3-.9"/><path d="m19.1 12.2.3-.9"/><path d="m19.6 18.7-.4-1"/><path d="m16.8 12.3-.4-1"/><path d="m14.3 16.6 1-.4"/><path d="m20.7 13.8 1-.4"/></svg><div style="position:absolute;left:60px;top:535.15px;font:400 17.14px 'Liberation Sans',sans-serif;line-height:1;color:#aab2be;white-space:nowrap;letter-spacing:-0.01px;">Personnel</div><svg style="position:absolute;left:23px;top:585.7px;" width="21" height="21" viewBox="0 0 24 24" fill="none" stroke="#aab2be" stroke-width="1.8" stroke-linecap="round" stroke-linejoin="round"><path d="M3 3v16a2 2 0 0 0 2 2h16"/><path d="M18 17V9"/><path d="M13 17V5"/><path d="M8 17v-3"/></svg><div style="position:absolute;left:60px;top:587.85px;font:400 17.14px 'Liberation Sans',sans-serif;line-height:1;color:#aab2be;white-space:nowrap;letter-spacing:0.18px;">Reports</div><svg style="position:absolute;left:23px;top:638.1px;" width="21" height="21" viewBox="0 0 24 24" fill="none" stroke="#aab2be" stroke-width="1.8" stroke-linecap="round" stroke-linejoin="round"><path d="M12 7v14"/><path d="M3 18a1 1 0 0 1-1-1V4a1 1 0 0 1 1-1h5a4 4 0 0 1 4 4 4 4 0 0 1 4-4h5a1 1 0 0 1 1 1v13a1 1 0 0 1-1 1h-6a3 3 0 0 0-3 3 3 3 0 0 0-3-3z"/></svg><div style="position:absolute;left:60px;top:640.25px;font:400 17.14px 'Liberation Sans',sans-serif;line-height:1;color:#aab2be;white-space:nowrap;letter-spacing:0.38px;">Compliance Library</div><svg style="position:absolute;left:23px;top:689.9px;" width="21" height="21" viewBox="0 0 24 24" fill="none" stroke="#38bdf8" stroke-width="1.8" stroke-linecap="round" stroke-linejoin="round"><rect width="16" height="20" x="4" y="2" rx="2"/><line x1="8" x2="16" y1="6" y2="6"/><line x1="16" x2="16" y1="14" y2="18"/><path d="M16 10h.01"/><path d="M12 10h.01"/><path d="M8 10h.01"/><path d="M12 14h.01"/><path d="M8 14h.01"/><path d="M12 18h.01"/><path d="M8 18h.01"/></svg><div style="position:absolute;left:60px;top:692.05px;font:400 17.14px 'Liberation Sans',sans-serif;line-height:1;color:#38bdf8;white-space:nowrap;letter-spacing:0.7px;">Accounting</div><svg style="position:absolute;left:23px;top:742.4px;" width="21" height="21" viewBox="0 0 24 24" fill="none" stroke="#aab2be" stroke-width="1.8" stroke-linecap="round" stroke-linejoin="round"><path d="M20 13c0 5-3.5 7.5-7.66 8.95a1 1 0 0 1-.67-.01C7.5 20.5 4 18 4 13V6a1 1 0 0 1 1-1c2 0 4.5-1.2 6.24-2.72a1.17 1.17 0 0 1 1.52 0C14.51 3.81 17 5 19 5a1 1 0 0 1 1 1z"/></svg><div style="position:absolute;left:60px;top:744.55px;font:400 17.14px 'Liberation Sans',sans-serif;line-height:1;color:#aab2be;white-space:nowrap;letter-spacing:0.57px;">Vault</div><div style="position:absolute;left:60px;top:353.65px;font:400 17.14px 'Liberation Sans',sans-serif;line-height:1;color:#aab2be;white-space:nowrap;letter-spacing:0.96px;">Compliance</div><div style="position:absolute;left:60px;top:376.15px;font:400 17.14px 'Liberation Sans',sans-serif;line-height:1;color:#aab2be;white-space:nowrap;letter-spacing:-0.36px;">(ADs/SBs)</div><div style="position:absolute;left:0px;top:779px;width:257px;height:1px;background:#252c3b;"></div><svg style="position:absolute;left:23px;top:807.8px;" width="21" height="21" viewBox="0 0 24 24" fill="none" stroke="#aab2be" stroke-width="1.8" stroke-linecap="round" stroke-linejoin="round"><path d="M12.22 2h-.44a2 2 0 0 0-2 2v.18a2 2 0 0 1-1 1.73l-.43.25a2 2 0 0 1-2 0l-.15-.08a2 2 0 0 0-2.73.73l-.22.38a2 2 0 0 0 .73 2.73l.15.1a2 2 0 0 1 1 1.72v.51a2 2 0 0 1-1 1.74l-.15.09a2 2 0 0 0-.73 2.730l.22.38a2 2 0 0 0 2.73.73l.15-.08a2 2 0 0 1 2 0l.43.25a2 2 0 0 1 1 1.73V20a2 2 0 0 0 2 2h.44a2 2 0 0 0 2-2v-.18a2 2 0 0 1 1-1.73l.43-.25a2 2 0 0 1 2 0l.15.08a2 2 0 0 0 2.73-.73l.22-.39a2 2 0 0 0-.73-2.73l-.15-.08a2 2 0 0 1-1-1.74v-.5a2 2 0 0 1 1-1.74l.15-.09a2 2 0 0 0 .73-2.73l-.22-.38a2 2 0 0 0-2.73-.73l-.15.08a2 2 0 0 1-2 0l-.43-.25a2 2 0 0 1-1-1.73V4a2 2 0 0 0-2-2z"/><circle cx="12" cy="12" r="3"/></svg><div style="position:absolute;left:60px;top:809.95px;font:400 17.14px 'Liberation Sans',sans-serif;line-height:1;color:#aab2be;white-space:nowrap;letter-spacing:0.45px;">Settings</div><svg style="position:absolute;left:42px;top:857px;" width="17" height="17" viewBox="0 0 24 24" fill="none" stroke="#7d8593" stroke-width="1.8" stroke-linecap="round" stroke-linejoin="round"><path d="M6 22V4a2 2 0 0 1 2-2h8a2 2 0 0 1 2 2v18Z"/><path d="M6 12H4a2 2 0 0 0-2 2v6a2 2 0 0 0 2 2h2"/><path d="M18 9h2a2 2 0 0 1 2 2v9a2 2 0 0 1-2 2h-2"/><path d="M10 6h4"/><path d="M10 10h4"/><path d="M10 14h4"/><path d="M10 18h4"/></svg><div style="position:absolute;left:74px;top:858.54px;font:400 14.29px 'Liberation Sans',sans-serif;line-height:1;color:#7d8593;white-space:nowrap;letter-spacing:0.27px;">Business</div><svg style="position:absolute;left:42px;top:899.5px;" width="17" height="17" viewBox="0 0 24 24" fill="none" stroke="#7d8593" stroke-width="1.8" stroke-linecap="round" stroke-linejoin="round"><rect width="20" height="12" x="2" y="6" rx="6" ry="6"/><circle cx="8" cy="12" r="2"/></svg><div style="position:absolute;left:74px;top:901.04px;font:400 14.29px 'Liberation Sans',sans-serif;line-height:1;color:#7d8593;white-space:nowrap;letter-spacing:0.65px;">Modules</div><svg style="position:absolute;left:42px;top:942.5px;" width="17" height="17" viewBox="0 0 24 24" fill="none" stroke="#7d8593" stroke-width="1.8" stroke-linecap="round" stroke-linejoin="round"><rect width="20" height="14" x="2" y="5" rx="2"/><line x1="2" x2="22" y1="10" y2="10"/></svg><div style="position:absolute;left:74px;top:944.04px;font:400 14.29px 'Liberation Sans',sans-serif;line-height:1;color:#7d8593;white-space:nowrap;letter-spacing:0.29px;">Billing</div><svg style="position:absolute;left:42px;top:985.5px;" width="17" height="17" viewBox="0 0 24 24" fill="none" stroke="#7d8593" stroke-width="1.8" stroke-linecap="round" stroke-linejoin="round"><path d="M20 13c0 5-3.5 7.5-7.66 8.95a1 1 0 0 1-.67-.01C7.5 20.5 4 18 4 13V6a1 1 0 0 1 1-1c2 0 4.5-1.2 6.24-2.72a1.17 1.17 0 0 1 1.52 0C14.51 3.81 17 5 19 5a1 1 0 0 1 1 1z"/><path d="m9 12 2 2 4-4"/></svg><div style="position:absolute;left:74px;top:987.04px;font:400 14.29px 'Liberation Sans',sans-serif;line-height:1;color:#7d8593;white-space:nowrap;letter-spacing:0.44px;">Audit Log</div><svg style="position:absolute;left:24px;top:1033px;" width="18" height="18" viewBox="0 0 24 24" fill="none" stroke="#aab2be" stroke-width="1.8" stroke-linecap="round" stroke-linejoin="round"><path d="m15 18-6-6 6-6"/></svg><div style="position:absolute;left:60px;top:1033.65px;font:400 17.14px 'Liberation Sans',sans-serif;line-height:1;color:#aab2be;white-space:nowrap;letter-spacing:0.2px;">Collapse</div><div style="position:absolute;left:260px;top:0px;width:2008px;height:62px;background:#131a28;"></div><div style="position:absolute;left:260px;top:62px;width:2008px;height:1px;background:#252c3b;"></div><div style="position:absolute;left:288px;top:21.17px;font:400 17.71px 'Liberation Sans',sans-serif;line-height:1;color:#b9c0cb;white-space:nowrap;letter-spacing:-0.27px;">Central Arkansas Aviation Services</div><div style="position:absolute;left:2010px;top:8.5px;width:43px;height:42.2px;box-sizing:border-box;border:1px solid #252c3b;border-radius:10px;"></div><svg style="position:absolute;left:2021.5px;top:21.5px;" width="19" height="19" viewBox="0 0 24 24" fill="none" stroke="#c9ced6" stroke-width="1.7" stroke-linecap="round" stroke-linejoin="round"><path d="M6 8a6 6 0 0 1 12 0c0 7 3 9 3 9H3s3-2 3-9"/><path d="M10.3 21a1.94 1.94 0 0 0 3.4 0"/></svg><div style="position:absolute;left:2035px;top:17px;width:9px;height:9px;border-radius:50%;background:#38bdf8;"></div><div style="position:absolute;left:2067px;top:8.5px;width:133px;height:42.2px;box-sizing:border-box;border:1px solid #252c3b;border-radius:10px;"></div><svg style="position:absolute;left:2082px;top:22px;" width="16" height="16" viewBox="0 0 24 24" fill="none" stroke="#c9ced6" stroke-width="1.7" stroke-linecap="round" stroke-linejoin="round"><path d="M9.937 15.5A2 2 0 0 0 8.5 14.063l-6.135-1.582a.5.5 0 0 1 0-.962L8.5 9.936A2 2 0 0 0 9.937 8.5l1.582-6.135a.5.5 0 0 1 .963 0L14.063 8.5A2 2 0 0 0 15.5 9.937l6.135 1.581a.5.5 0 0 1 0 .964L15.5 14.063a2 2 0 0 0-1.437 1.437l-1.582 6.135a.5.5 0 0 1-.963 0z"/><path d="M20 3v4"/><path d="M22 5h-4"/><path d="M4 17v2"/><path d="M5 18H3"/></svg><div style="position:absolute;left:2109px;top:21.95px;font:400 15px 'Liberation Sans',sans-serif;line-height:1;color:#c5ccd6;white-space:nowrap;letter-spacing:0.65px;-webkit-text-stroke:0.21px #c5ccd6;">AdaptGent</div><div style="position:absolute;left:2214px;top:11px;width:38px;height:38px;border-radius:50%;background:radial-gradient(ellipse 20% 26% at 50% 40%, #f0d0b0 0%, rgba(232,190,170,0) 100%),radial-gradient(ellipse 24% 40% at 47% 55%, #e8b4a4 0%, #c98f86 55%, rgba(150,90,90,0) 100%),radial-gradient(ellipse 16% 22% at 80% 36%, #0e0c0a 0%, rgba(14,12,10,0) 100%),radial-gradient(ellipse 30% 22% at 45% 12%, #8d98a8 0%, rgba(120,130,145,0) 100%),radial-gradient(ellipse 22% 34% at 20% 50%, #8a8f99 0%, rgba(110,105,110,0) 100%),radial-gradient(ellipse 20% 20% at 78% 72%, #8a7a70 0%, rgba(120,110,100,0) 100%),radial-gradient(circle at 50% 50%, #4d3d3c 0%, #2c2528 60%, #1a1c24 100%);"></div><div style="position:absolute;left:538px;top:115px;width:51px;height:52px;background:#13263b;border-radius:11px;"></div><svg style="position:absolute;left:552.5px;top:130px;" width="22" height="22" viewBox="0 0 24 24" fill="none" stroke="#38bdf8" stroke-width="1.8" stroke-linecap="round" stroke-linejoin="round"><rect width="16" height="20" x="4" y="2" rx="2"/><line x1="8" x2="16" y1="6" y2="6"/><line x1="16" x2="16" y1="14" y2="18"/><path d="M16 10h.01"/><path d="M12 10h.01"/><path d="M8 10h.01"/><path d="M12 14h.01"/><path d="M8 14h.01"/><path d="M12 18h.01"/><path d="M8 18h.01"/></svg><div style="position:absolute;left:605px;top:115.09px;font:700 28.57px 'Liberation Sans',sans-serif;line-height:1;color:#ffffff;white-space:nowrap;letter-spacing:0.51px;">Accounting</div><div style="position:absolute;left:605px;top:152.11px;font:400 17.43px 'Liberation Sans',sans-serif;line-height:1;color:#a3abb8;white-space:nowrap;letter-spacing:-0.28px;">Aviation MRO Financial Dashboard</div><div style="position:absolute;left:1640px;top:119px;width:160px;height:45px;background:#38bdf8;border-radius:9px;"></div><svg style="position:absolute;left:1660px;top:134px;" width="15" height="15" viewBox="0 0 24 24" fill="none" stroke="#0b1526" stroke-width="2.2" stroke-linecap="round" stroke-linejoin="round"><path d="M5 12h14"/><path d="M12 5v14"/></svg><div style="position:absolute;left:1685px;top:132.43px;font:400 18.96px 'Liberation Sans',sans-serif;line-height:1;color:#0b1526;white-space:nowrap;letter-spacing:-0.66px;-webkit-text-stroke:0.57px #0b1526;">New Invoice</div><div style="position:absolute;left:1810px;top:119px;width:193px;height:45px;box-sizing:border-box;background:#0f1522;border:1px solid #252c3b;border-radius:9px;"></div><svg style="position:absolute;left:1829.5px;top:133px;" width="17" height="17" viewBox="0 0 24 24" fill="none" stroke="#ffffff" stroke-width="2" stroke-linecap="round" stroke-linejoin="round"><line x1="12" x2="12" y1="2" y2="22"/><path d="M17 5H9.5a3.5 3.5 0 0 0 0 7h5a3.5 3.5 0 0 1 0 7H6"/></svg><div style="position:absolute;left:1857px;top:132.99px;font:400 18.29px 'Liberation Sans',sans-serif;line-height:1;color:#ffffff;white-space:nowrap;letter-spacing:-0.66px;-webkit-text-stroke:0.55px #ffffff;">Record Expense</div><div style="position:absolute;left:538px;top:201.6px;width:1465px;height:62.9px;box-sizing:border-box;background:#1e1926;border:1px solid #3a2331;border-radius:12px;"></div><svg style="position:absolute;left:558.5px;top:223.4px;" width="20" height="20" viewBox="0 0 24 24" fill="none" stroke="#f87171" stroke-width="2" stroke-linecap="round" stroke-linejoin="round"><circle cx="12" cy="12" r="10"/><line x1="12" x2="12" y1="8" y2="12"/><line x1="12" x2="12.01" y1="16" y2="16"/></svg><div style="position:absolute;left:594px;top:223.88px;font:400 18.43px 'Liberation Sans',sans-serif;line-height:1;color:#f87171;white-space:nowrap;letter-spacing:-0.41px;-webkit-text-stroke:0.26px #f87171;">2 invoices overdue</div><div style="position:absolute;left:1951px;top:225.85px;font:400 15.72px 'Liberation Sans',sans-serif;line-height:1;color:#f87171;white-space:nowrap;letter-spacing:-0.6px;-webkit-text-stroke:0.22px #f87171;text-decoration:underline;">View</div><div style="position:absolute;left:538px;top:294px;width:231.5px;height:129.5px;box-sizing:border-box;background:#121827;border:1px solid #252c3b;border-radius:12px;"></div><div style="position:absolute;left:558px;top:314px;width:32px;height:33px;background:#10352e;border-radius:8px;"></div><svg style="position:absolute;left:566px;top:322.5px;" width="16" height="16" viewBox="0 0 24 24" fill="none" stroke="#34d399" stroke-width="2" stroke-linecap="round" stroke-linejoin="round"><path d="M19 7V4a1 1 0 0 0-1-1H5a2 2 0 0 0 0 4h15a1 1 0 0 1 1 1v4h-3a2 2 0 0 0 0 4h3a1 1 0 0 0 1-1v-2a1 1 0 0 0-1-1"/><path d="M3 5v14a2 2 0 0 0 2 2h15a1 1 0 0 0 1-1v-4"/></svg><div style="position:absolute;left:558px;top:354.33px;font:400 15.14px 'Liberation Sans',sans-serif;line-height:1;color:#a3abb8;white-space:nowrap;letter-spacing:-0.45px;">Cash Balance</div><div style="position:absolute;left:558px;top:375.9px;font:700 23.42px 'Liberation Sans',sans-serif;line-height:1;color:#34d399;white-space:nowrap;letter-spacing:-0.91px;">$73,156.58</div><div style="position:absolute;left:784.7px;top:294px;width:231.5px;height:129.5px;box-sizing:border-box;background:#121827;border:1px solid #252c3b;border-radius:12px;"></div><div style="position:absolute;left:804.7px;top:314px;width:32px;height:33px;background:#172a46;border-radius:8px;"></div><svg style="position:absolute;left:812.7px;top:322.5px;" width="16" height="16" viewBox="0 0 24 24" fill="none" stroke="#60a5fa" stroke-width="2" stroke-linecap="round" stroke-linejoin="round"><rect width="20" height="14" x="2" y="5" rx="2"/><line x1="2" x2="22" y1="10" y2="10"/></svg><div style="position:absolute;left:804.7px;top:354.33px;font:400 15.14px 'Liberation Sans',sans-serif;line-height:1;color:#a3abb8;white-space:nowrap;letter-spacing:0.01px;">AR Outstanding</div><div style="position:absolute;left:804.7px;top:376.38px;font:700 22.85px 'Liberation Sans',sans-serif;line-height:1;color:#60a5fa;white-space:nowrap;letter-spacing:-0.91px;">$3,919.75</div><div style="position:absolute;left:1031.4px;top:294px;width:231.5px;height:129.5px;box-sizing:border-box;background:#121827;border:1px solid #252c3b;border-radius:12px;"></div><div style="position:absolute;left:1051.4px;top:314px;width:32px;height:33px;background:#2e2620;border-radius:8px;"></div><svg style="position:absolute;left:1059.4px;top:322.5px;" width="16" height="16" viewBox="0 0 24 24" fill="none" stroke="#f59e0b" stroke-width="2" stroke-linecap="round" stroke-linejoin="round"><line x1="12" x2="12" y1="2" y2="22"/><path d="M17 5H9.5a3.5 3.5 0 0 0 0 7h5a3.5 3.5 0 0 1 0 7H6"/></svg><div style="position:absolute;left:1051.4px;top:354.33px;font:400 15.14px 'Liberation Sans',sans-serif;line-height:1;color:#a3abb8;white-space:nowrap;letter-spacing:-0.08px;">AP Outstanding</div><div style="position:absolute;left:1051.4px;top:373.74px;font:700 26px 'Liberation Sans',sans-serif;line-height:1;color:#fbbf24;white-space:nowrap;letter-spacing:-0.38px;">$0.00</div><div style="position:absolute;left:1278.1px;top:294px;width:231.5px;height:129.5px;box-sizing:border-box;background:#121827;border:1px solid #252c3b;border-radius:12px;"></div><div style="position:absolute;left:1298.1px;top:314px;width:32px;height:33px;background:#10352e;border-radius:8px;"></div><svg style="position:absolute;left:1306.1px;top:322.5px;" width="16" height="16" viewBox="0 0 24 24" fill="none" stroke="#34d399" stroke-width="2" stroke-linecap="round" stroke-linejoin="round"><polyline points="22 7 13.5 15.5 8.5 10.5 2 17"/><polyline points="16 7 22 7 22 13"/></svg><div style="position:absolute;left:1298.1px;top:354.5px;font:400 14.94px 'Liberation Sans',sans-serif;line-height:1;color:#a3abb8;white-space:nowrap;letter-spacing:-0.53px;">MTD Revenue</div><div style="position:absolute;left:1298.1px;top:373.74px;font:700 26px 'Liberation Sans',sans-serif;line-height:1;color:#34d399;white-space:nowrap;letter-spacing:-0.38px;">$0.00</div><div style="position:absolute;left:1524.8px;top:294px;width:231.5px;height:129.5px;box-sizing:border-box;background:#121827;border:1px solid #252c3b;border-radius:12px;"></div><div style="position:absolute;left:1544.8px;top:314px;width:32px;height:33px;background:#2c1d26;border-radius:8px;"></div><svg style="position:absolute;left:1552.8px;top:322.5px;" width="16" height="16" viewBox="0 0 24 24" fill="none" stroke="#f87171" stroke-width="2" stroke-linecap="round" stroke-linejoin="round"><polyline points="22 17 13.5 8.5 8.5 13.5 2 7"/><polyline points="16 17 22 17 22 11"/></svg><div style="position:absolute;left:1544.8px;top:354.41px;font:400 15.05px 'Liberation Sans',sans-serif;line-height:1;color:#a3abb8;white-space:nowrap;letter-spacing:-0.53px;">MTD Expenses</div><div style="position:absolute;left:1544.8px;top:373.74px;font:700 26px 'Liberation Sans',sans-serif;line-height:1;color:#f87171;white-space:nowrap;letter-spacing:-0.38px;">$0.00</div><div style="position:absolute;left:1771.5px;top:294px;width:231.5px;height:129.5px;box-sizing:border-box;background:#121827;border:1px solid #252c3b;border-radius:12px;"></div><div style="position:absolute;left:1791.5px;top:314px;width:32px;height:33px;background:#10352e;border-radius:8px;"></div><svg style="position:absolute;left:1799.5px;top:322.5px;" width="16" height="16" viewBox="0 0 24 24" fill="none" stroke="#34d399" stroke-width="2" stroke-linecap="round" stroke-linejoin="round"><path d="M3 3v16a2 2 0 0 0 2 2h16"/><path d="M18 17V9"/><path d="M13 17V5"/><path d="M8 17v-3"/></svg><div style="position:absolute;left:1791.5px;top:354.33px;font:400 15.14px 'Liberation Sans',sans-serif;line-height:1;color:#a3abb8;white-space:nowrap;letter-spacing:-0.37px;">MTD Profit</div><div style="position:absolute;left:1791.5px;top:373.74px;font:700 26px 'Liberation Sans',sans-serif;line-height:1;color:#34d399;white-space:nowrap;letter-spacing:-0.38px;">$0.00</div><div style="position:absolute;left:538px;top:463px;width:281px;height:63.5px;box-sizing:border-box;background:#121827;border:1px solid #252c3b;border-radius:12px;"></div><svg style="position:absolute;left:558.5px;top:484.7px;" width="20" height="20" viewBox="0 0 24 24" fill="none" stroke="#38bdf8" stroke-width="1.8" stroke-linecap="round" stroke-linejoin="round"><rect x="4" y="2" width="16" height="20" rx="2"/><path d="M14.5 8H11a1.75 1.75 0 0 0 0 3.5h2a1.75 1.75 0 0 1 0 3.5H9.5"/><path d="M12 6.5v11"/></svg><div style="position:absolute;left:594px;top:486.1px;font:400 19px 'Liberation Sans',sans-serif;line-height:1;color:#ffffff;white-space:nowrap;letter-spacing:-0.65px;-webkit-text-stroke:0.27px #ffffff;">Invoices</div><div style="position:absolute;left:834.1px;top:463px;width:281px;height:63.5px;box-sizing:border-box;background:#121827;border:1px solid #252c3b;border-radius:12px;"></div><svg style="position:absolute;left:854.6px;top:484.7px;" width="20" height="20" viewBox="0 0 24 24" fill="none" stroke="#38bdf8" stroke-width="1.8" stroke-linecap="round" stroke-linejoin="round"><line x1="12" x2="12" y1="2" y2="22"/><path d="M17 5H9.5a3.5 3.5 0 0 0 0 7h5a3.5 3.5 0 0 1 0 7H6"/></svg><div style="position:absolute;left:890.1px;top:486.1px;font:400 19px 'Liberation Sans',sans-serif;line-height:1;color:#ffffff;white-space:nowrap;letter-spacing:-0.61px;-webkit-text-stroke:0.27px #ffffff;">Expenses</div><div style="position:absolute;left:1130.2px;top:463px;width:281px;height:63.5px;box-sizing:border-box;background:#121827;border:1px solid #252c3b;border-radius:12px;"></div><svg style="position:absolute;left:1150.7px;top:484.7px;" width="20" height="20" viewBox="0 0 24 24" fill="none" stroke="#38bdf8" stroke-width="1.8" stroke-linecap="round" stroke-linejoin="round"><path d="M12 7v14"/><path d="M3 18a1 1 0 0 1-1-1V4a1 1 0 0 1 1-1h5a4 4 0 0 1 4 4 4 4 0 0 1 4-4h5a1 1 0 0 1 1 1v13a1 1 0 0 1-1 1h-6a3 3 0 0 0-3 3 3 3 0 0 0-3-3z"/></svg><div style="position:absolute;left:1186.2px;top:486.13px;font:400 18.96px 'Liberation Sans',sans-serif;line-height:1;color:#ffffff;white-space:nowrap;letter-spacing:-0.66px;-webkit-text-stroke:0.27px #ffffff;">General Ledger</div><div style="position:absolute;left:1426.3px;top:463px;width:281px;height:63.5px;box-sizing:border-box;background:#121827;border:1px solid #252c3b;border-radius:12px;"></div><svg style="position:absolute;left:1446.8px;top:484.7px;" width="20" height="20" viewBox="0 0 24 24" fill="none" stroke="#38bdf8" stroke-width="1.8" stroke-linecap="round" stroke-linejoin="round"><path d="M21.21 15.89A10 10 0 1 1 8 2.83"/><path d="M22 12A10 10 0 0 0 12 2v10z"/></svg><div style="position:absolute;left:1482.3px;top:486.1px;font:400 19px 'Liberation Sans',sans-serif;line-height:1;color:#ffffff;white-space:nowrap;letter-spacing:-0.4px;-webkit-text-stroke:0.27px #ffffff;">Reports</div><div style="position:absolute;left:1722.4px;top:463px;width:281px;height:63.5px;box-sizing:border-box;background:#121827;border:1px solid #252c3b;border-radius:12px;"></div><svg style="position:absolute;left:1742.9px;top:484.7px;" width="20" height="20" viewBox="0 0 24 24" fill="none" stroke="#38bdf8" stroke-width="1.8" stroke-linecap="round" stroke-linejoin="round"><rect width="16" height="20" x="4" y="2" rx="2"/><line x1="8" x2="16" y1="6" y2="6"/><line x1="16" x2="16" y1="14" y2="18"/><path d="M16 10h.01"/><path d="M12 10h.01"/><path d="M8 10h.01"/><path d="M12 14h.01"/><path d="M8 14h.01"/><path d="M12 18h.01"/><path d="M8 18h.01"/></svg><div style="position:absolute;left:1778.4px;top:486.1px;font:400 19px 'Liberation Sans',sans-serif;line-height:1;color:#ffffff;white-space:nowrap;letter-spacing:0.36px;-webkit-text-stroke:0.27px #ffffff;">Settings</div><div style="position:absolute;left:538px;top:565.4px;width:717.6px;height:425.6px;box-sizing:border-box;background:#121827;border:1px solid #252c3b;border-radius:12px;"></div><svg style="position:absolute;left:558.5px;top:589px;" width="17" height="17" viewBox="0 0 24 24" fill="none" stroke="#38bdf8" stroke-width="2" stroke-linecap="round" stroke-linejoin="round"><rect x="4" y="2" width="16" height="20" rx="2"/><path d="M14.5 8H11a1.75 1.75 0 0 0 0 3.5h2a1.75 1.75 0 0 1 0 3.5H9.5"/><path d="M12 6.5v11"/></svg><div style="position:absolute;left:587.5px;top:588.62px;font:700 18.13px 'Liberation Sans',sans-serif;line-height:1;color:#ffffff;white-space:nowrap;letter-spacing:-0.64px;">Recent Invoices</div><div style="position:absolute;left:1184.66px;top:589.35px;font:400 15.71px 'Liberation Sans',sans-serif;line-height:1;color:#38bdf8;white-space:nowrap;letter-spacing:-0.52px;-webkit-text-stroke:0.22px #38bdf8;">View All</div><div style="position:absolute;left:539px;top:628.5px;width:715.6px;height:1px;background:#1f2636;"></div><div style="position:absolute;left:539px;top:700.8px;width:715.6px;height:1px;background:#1f2636;"></div><div style="position:absolute;left:539px;top:773.1px;width:715.6px;height:1px;background:#1f2636;"></div><div style="position:absolute;left:539px;top:845.4px;width:715.6px;height:1px;background:#1f2636;"></div><div style="position:absolute;left:539px;top:917.7px;width:715.6px;height:1px;background:#1f2636;"></div><div style="position:absolute;left:1285px;top:565.4px;width:718px;height:425.6px;box-sizing:border-box;background:#121827;border:1px solid #252c3b;border-radius:12px;"></div><svg style="position:absolute;left:1305.5px;top:589px;" width="17" height="17" viewBox="0 0 24 24" fill="none" stroke="#38bdf8" stroke-width="2" stroke-linecap="round" stroke-linejoin="round"><line x1="12" x2="12" y1="2" y2="22"/><path d="M17 5H9.5a3.5 3.5 0 0 0 0 7h5a3.5 3.5 0 0 1 0 7H6"/></svg><div style="position:absolute;left:1334.5px;top:588.84px;font:700 17.88px 'Liberation Sans',sans-serif;line-height:1;color:#ffffff;white-space:nowrap;letter-spacing:-0.64px;">Recent Expenses</div><div style="position:absolute;left:1932.06px;top:589.35px;font:400 15.71px 'Liberation Sans',sans-serif;line-height:1;color:#38bdf8;white-space:nowrap;letter-spacing:-0.52px;-webkit-text-stroke:0.22px #38bdf8;">View All</div><div style="position:absolute;left:1286px;top:628.5px;width:716px;height:1px;background:#1f2636;"></div><div style="position:absolute;left:1286px;top:700.8px;width:716px;height:1px;background:#1f2636;"></div><div style="position:absolute;left:1286px;top:773.1px;width:716px;height:1px;background:#1f2636;"></div><div style="position:absolute;left:1286px;top:845.4px;width:716px;height:1px;background:#1f2636;"></div><div style="position:absolute;left:1286px;top:917.7px;width:716px;height:1px;background:#1f2636;"></div><div style="position:absolute;left:553px;top:646.11px;font:400 18.14px 'Liberation Sans',sans-serif;line-height:1;color:#ffffff;white-space:nowrap;letter-spacing:0.9px;-webkit-text-stroke:0.54px #ffffff;">INV-00005</div><div style="position:absolute;left:654.8px;top:644.5px;width:65px;height:22px;background:#241f21;border-radius:11px;"></div><div style="position:absolute;left:664.46px;top:649.55px;font:700 11.3px 'Liberation Sans',sans-serif;line-height:1;color:#f59e0b;white-space:nowrap;letter-spacing:-0.4px;">PARTIAL</div><div style="position:absolute;left:553px;top:668.8px;font:400 14.57px 'Liberation Sans',sans-serif;line-height:1;color:#949cab;white-space:nowrap;letter-spacing:0.11px;">Bob Williams</div><div style="position:absolute;left:1175.35px;top:658.34px;font:400 15.84px 'Liberation Sans',sans-serif;line-height:1;color:#ffffff;white-space:nowrap;letter-spacing:-0.65px;-webkit-text-stroke:0.48px #ffffff;">$1,011.75</div><div style="position:absolute;left:553px;top:718.41px;font:400 18.14px 'Liberation Sans',sans-serif;line-height:1;color:#ffffff;white-space:nowrap;letter-spacing:0.9px;-webkit-text-stroke:0.54px #ffffff;">INV-00004</div><div style="position:absolute;left:654.8px;top:716.8px;width:47px;height:22px;background:#15223a;border-radius:11px;"></div><div style="position:absolute;left:664.48px;top:722.24px;font:700 10.82px 'Liberation Sans',sans-serif;line-height:1;color:#60a5fa;white-space:nowrap;letter-spacing:-0.4px;">SENT</div><div style="position:absolute;left:553px;top:741.1px;font:400 14.57px 'Liberation Sans',sans-serif;line-height:1;color:#949cab;white-space:nowrap;letter-spacing:0.05px;">Carol Patterson</div><div style="position:absolute;left:1159.18px;top:728.24px;font:400 18.71px 'Liberation Sans',sans-serif;line-height:1;color:#ffffff;white-space:nowrap;letter-spacing:-0.38px;-webkit-text-stroke:0.56px #ffffff;">$3,408.00</div><div style="position:absolute;left:553px;top:790.71px;font:400 18.14px 'Liberation Sans',sans-serif;line-height:1;color:#ffffff;white-space:nowrap;letter-spacing:0.8px;-webkit-text-stroke:0.54px #ffffff;">INV-00003</div><div style="position:absolute;left:654px;top:789.1px;width:44px;height:22px;background:#112a29;border-radius:11px;"></div><div style="position:absolute;left:663.66px;top:794.24px;font:700 11.18px 'Liberation Sans',sans-serif;line-height:1;color:#34d399;white-space:nowrap;letter-spacing:-0.4px;">PAID</div><div style="position:absolute;left:553px;top:813.4px;font:400 14.57px 'Liberation Sans',sans-serif;line-height:1;color:#949cab;white-space:nowrap;letter-spacing:-0.02px;">David Chen</div><div style="position:absolute;left:1174.18px;top:800.54px;font:400 18.71px 'Liberation Sans',sans-serif;line-height:1;color:#ffffff;white-space:nowrap;letter-spacing:-0.4px;-webkit-text-stroke:0.56px #ffffff;">$303.53</div><div style="position:absolute;left:553px;top:863.01px;font:400 18.14px 'Liberation Sans',sans-serif;line-height:1;color:#ffffff;white-space:nowrap;letter-spacing:0.8px;-webkit-text-stroke:0.54px #ffffff;">INV-00002</div><div style="position:absolute;left:654px;top:861.4px;width:44px;height:22px;background:#112a29;border-radius:11px;"></div><div style="position:absolute;left:663.66px;top:866.54px;font:700 11.18px 'Liberation Sans',sans-serif;line-height:1;color:#34d399;white-space:nowrap;letter-spacing:-0.4px;">PAID</div><div style="position:absolute;left:553px;top:885.7px;font:400 14.57px 'Liberation Sans',sans-serif;line-height:1;color:#949cab;white-space:nowrap;letter-spacing:0.28px;">Gary Prescott</div><div style="position:absolute;left:1160.18px;top:872.84px;font:400 18.71px 'Liberation Sans',sans-serif;line-height:1;color:#ffffff;white-space:nowrap;letter-spacing:-0.5px;-webkit-text-stroke:0.56px #ffffff;">$5,058.75</div><div style="position:absolute;left:553px;top:935.31px;font:400 18.14px 'Liberation Sans',sans-serif;line-height:1;color:#ffffff;white-space:nowrap;letter-spacing:0.3px;-webkit-text-stroke:0.54px #ffffff;">INV-00001</div><div style="position:absolute;left:650px;top:933.7px;width:44px;height:22px;background:#112a29;border-radius:11px;"></div><div style="position:absolute;left:659.66px;top:938.84px;font:700 11.18px 'Liberation Sans',sans-serif;line-height:1;color:#34d399;white-space:nowrap;letter-spacing:-0.4px;">PAID</div><div style="position:absolute;left:553px;top:958px;font:400 14.57px 'Liberation Sans',sans-serif;line-height:1;color:#949cab;white-space:nowrap;letter-spacing:0.19px;">Tom &amp; Helen Mitchell</div><div style="position:absolute;left:1167.26px;top:946.24px;font:400 17.4px 'Liberation Sans',sans-serif;line-height:1;color:#ffffff;white-space:nowrap;letter-spacing:-0.65px;-webkit-text-stroke:0.52px #ffffff;">$1,512.30</div><div style="position:absolute;left:1300px;top:646.11px;font:400 18.14px 'Liberation Sans',sans-serif;line-height:1;color:#ffffff;white-space:nowrap;letter-spacing:-0.27px;-webkit-text-stroke:0.54px #ffffff;">Conway Corp</div><div style="position:absolute;left:1417px;top:644.5px;width:44px;height:22px;background:#112a29;border-radius:11px;"></div><div style="position:absolute;left:1426.66px;top:649.64px;font:700 11.18px 'Liberation Sans',sans-serif;line-height:1;color:#34d399;white-space:nowrap;letter-spacing:-0.4px;">PAID</div><div style="position:absolute;left:1300px;top:668.8px;font:400 14.57px 'Liberation Sans',sans-serif;line-height:1;color:#949cab;white-space:nowrap;letter-spacing:0.13px;">utilities – Electric + water — January 2026</div><div style="position:absolute;left:1919.88px;top:655.94px;font:400 18.71px 'Liberation Sans',sans-serif;line-height:1;color:#ffffff;white-space:nowrap;letter-spacing:-0.02px;-webkit-text-stroke:0.56px #ffffff;">$325.00</div><div style="position:absolute;left:1300px;top:718.41px;font:400 18.14px 'Liberation Sans',sans-serif;line-height:1;color:#ffffff;white-space:nowrap;letter-spacing:-0.26px;-webkit-text-stroke:0.54px #ffffff;">Shell Aviation</div><div style="position:absolute;left:1416px;top:716.8px;width:44px;height:22px;background:#112a29;border-radius:11px;"></div><div style="position:absolute;left:1425.66px;top:721.94px;font:700 11.18px 'Liberation Sans',sans-serif;line-height:1;color:#34d399;white-space:nowrap;letter-spacing:-0.4px;">PAID</div><div style="position:absolute;left:1300px;top:741.1px;font:400 14.57px 'Liberation Sans',sans-serif;line-height:1;color:#949cab;white-space:nowrap;letter-spacing:0.1px;">fuel_vehicle – Shop truck fuel + tug fuel — January</div><div style="position:absolute;left:1920.18px;top:728.24px;font:400 18.71px 'Liberation Sans',sans-serif;line-height:1;color:#ffffff;white-space:nowrap;letter-spacing:-0.07px;-webkit-text-stroke:0.56px #ffffff;">$245.00</div><div style="position:absolute;left:1300px;top:791.01px;font:400 17.8px 'Liberation Sans',sans-serif;line-height:1;color:#ffffff;white-space:nowrap;letter-spacing:-0.64px;-webkit-text-stroke:0.53px #ffffff;">AT&amp;T Business</div><div style="position:absolute;left:1423.5px;top:789.1px;width:44px;height:22px;background:#112a29;border-radius:11px;"></div><div style="position:absolute;left:1433.16px;top:794.24px;font:700 11.18px 'Liberation Sans',sans-serif;line-height:1;color:#34d399;white-space:nowrap;letter-spacing:-0.4px;">PAID</div><div style="position:absolute;left:1300px;top:813.4px;font:400 14.57px 'Liberation Sans',sans-serif;line-height:1;color:#949cab;white-space:nowrap;letter-spacing:0.14px;">utilities – Internet + phone service — January 2026</div><div style="position:absolute;left:1921.18px;top:800.54px;font:400 18.71px 'Liberation Sans',sans-serif;line-height:1;color:#ffffff;white-space:nowrap;letter-spacing:-0.24px;-webkit-text-stroke:0.56px #ffffff;">$100.00</div><div style="position:absolute;left:1300px;top:863.01px;font:400 18.14px 'Liberation Sans',sans-serif;line-height:1;color:#ffffff;white-space:nowrap;letter-spacing:0.02px;-webkit-text-stroke:0.54px #ffffff;">Aircraft Spruce</div><div style="position:absolute;left:1430px;top:861.4px;width:44px;height:22px;background:#112a29;border-radius:11px;"></div><div style="position:absolute;left:1439.66px;top:866.54px;font:700 11.18px 'Liberation Sans',sans-serif;line-height:1;color:#34d399;white-space:nowrap;letter-spacing:-0.4px;">PAID</div><div style="position:absolute;left:1300px;top:885.7px;font:400 14.57px 'Liberation Sans',sans-serif;line-height:1;color:#949cab;white-space:nowrap;letter-spacing:0.08px;">consumables – Shop rags, safety wire, sealant, lubricants</div><div style="position:absolute;left:1922.68px;top:872.84px;font:400 18.71px 'Liberation Sans',sans-serif;line-height:1;color:#ffffff;white-space:nowrap;letter-spacing:-0.49px;-webkit-text-stroke:0.56px #ffffff;">$185.00</div><div style="position:absolute;left:1300px;top:935.31px;font:400 18.14px 'Liberation Sans',sans-serif;line-height:1;color:#ffffff;white-space:nowrap;letter-spacing:0.06px;-webkit-text-stroke:0.54px #ffffff;">Office Depot</div><div style="position:absolute;left:1411px;top:933.7px;width:44px;height:22px;background:#112a29;border-radius:11px;"></div><div style="position:absolute;left:1420.66px;top:938.84px;font:700 11.18px 'Liberation Sans',sans-serif;line-height:1;color:#34d399;white-space:nowrap;letter-spacing:-0.4px;">PAID</div><div style="position:absolute;left:1300px;top:958px;font:400 14.57px 'Liberation Sans',sans-serif;line-height:1;color:#949cab;white-space:nowrap;letter-spacing:0.21px;">office – Printer paper, toner, logbook continuation sheets</div><div style="position:absolute;left:1929.18px;top:945.14px;font:400 18.71px 'Liberation Sans',sans-serif;line-height:1;color:#ffffff;white-space:nowrap;letter-spacing:0.19px;-webkit-text-stroke:0.56px #ffffff;">$68.00</div></div></body></html>
